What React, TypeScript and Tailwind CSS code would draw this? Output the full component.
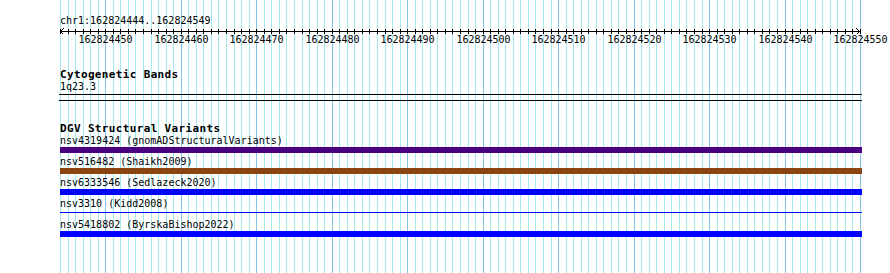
import React from "react";

const START = 162824444;
const BP_COUNT = 106;
const LEFT = 60;
const PX = 800 / BP_COUNT;

const xAt = (i: number) => Math.round(LEFT + i * PX) + 0.5;

interface Feature {
  id: string;
  source: string;
  color: string;
  thin?: boolean;
}

const features: Feature[] = [
  { id: "nsv4319424", source: "gnomADStructuralVariants", color: "bg-[#4b0082]" },
  { id: "nsv516482", source: "Shaikh2009", color: "bg-[#8b4513]" },
  { id: "nsv6333546", source: "Sedlazeck2020", color: "bg-[#0000ff]" },
  { id: "nsv3310", source: "Kidd2008", color: "bg-[#0000ff]", thin: true },
  { id: "nsv5418802", source: "ByrskaBishop2022", color: "bg-[#0000ff]" },
];

function GridLines() {
  const lines = Array.from({ length: BP_COUNT + 1 }, (_, i) => i);
  return (
    <svg className="absolute inset-0" width={890} height={273}>
      {lines.map((i) => {
        const major = (START + i) % 10 === 0;
        return (
          <line
            key={i}
            x1={xAt(i)}
            x2={xAt(i)}
            y1={0}
            y2={273}
            stroke={major ? "#84c4ea" : "#a6e8ef"}
            strokeWidth={1}
          />
        );
      })}
    </svg>
  );
}

function Ruler() {
  const ticks = Array.from({ length: BP_COUNT + 1 }, (_, i) => i);
  return (
    <svg width={802} height={7} className="block">
      <line x1={0} x2={800} y1={4.5} y2={4.5} stroke="#000" />
      {ticks.map((i) => (
        <line
          key={i}
          x1={xAt(i) - LEFT}
          x2={xAt(i) - LEFT}
          y1={2}
          y2={7}
          stroke="#000"
        />
      ))}
      <polyline points="4,1 0.5,4.5 4,8" fill="none" stroke="#000" />
      <polyline points="796,1 799.5,4.5 796,8" fill="none" stroke="#000" />
    </svg>
  );
}

function RulerLabels() {
  const majors = Array.from({ length: BP_COUNT + 1 }, (_, i) => i).filter(
    (i) => (START + i) % 10 === 0
  );
  return (
    <div className="relative h-[12px] text-[10px] leading-[12px]">
      {majors.map((i) => (
        <span
          key={i}
          className="absolute top-0 -translate-x-1/2 whitespace-nowrap"
          style={{ left: xAt(i) - LEFT }}
        >
          {START + i}
        </span>
      ))}
    </div>
  );
}

export default function App() {
  return (
    <div className="relative w-[890px] h-[273px] overflow-hidden bg-white text-black font-['DejaVu_Sans_Mono',monospace]">
      <GridLines />
      <div className="relative flex flex-col w-[862px] pl-[60px]">
        <div className="mt-[15px] text-[10px] leading-[12px]">
          chr1:162824444..162824549
        </div>
        <Ruler />
        <RulerLabels />

        <div className="mt-[22px] text-[11px] leading-[13px] font-bold tracking-[0.35px]">
          Cytogenetic Bands
        </div>
        <div className="text-[10px] leading-[12px]">1q23.3</div>
        <div className="-ml-px mt-px border-t border-black" />
        <div className="-ml-px mt-[5px] border-t border-black" />

        <div className="mt-[21px] text-[11px] leading-[13px] font-bold tracking-[0.35px]">
          DGV Structural Variants
        </div>
        <div className="flex flex-col gap-[3px]">
          {features.map((f) => (
            <div key={f.id} className="flex flex-col">
              <div className="text-[10px] leading-[12px] whitespace-nowrap">
                {f.id} ({f.source})
              </div>
              <div className="h-[6px] flex flex-col">
                {f.thin ? (
                  <div className={`mt-[2px] h-px w-full ${f.color}`} />
                ) : (
                  <div className={`h-[6px] w-full ${f.color}`} />
                )}
              </div>
            </div>
          ))}
        </div>
      </div>
    </div>
  );
}
